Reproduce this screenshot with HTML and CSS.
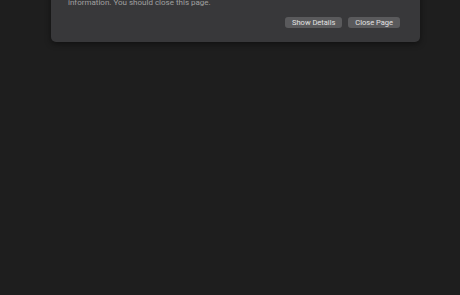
FILE: index.html
```html
<!DOCTYPE html>
<html lang="en">
<head>
    <meta charset="UTF-8">
    <meta name="viewport" content="width=device-width, initial-scale=1.0">
    <title>Deceptive Website Warning</title>
    <link rel="stylesheet" href="styles.css">
</head>
<body>
    <div class="warning-card">
        <div class="warning-title">Deceptive Website Warning</div>
        <p class="warning-text">
            This website may try to trick you into sharing personal or financial<br>
            information. You should close this page.
        </p>
        <div class="warning-actions">
            <button class="warning-button">Show Details</button>
            <button class="warning-button">Close Page</button>
        </div>
    </div>
</body>
</html>
```

FILE: styles.css
```css
* {
    margin: 0;
    padding: 0;
    box-sizing: border-box;
}

body {
    font-family: Roboto, "Liberation Sans", sans-serif;
    background-color: #1e1e1e;
    height: 100vh;
    overflow: hidden;
}

.warning-card {
    width: 369px;
    margin-left: 51px;
    margin-top: -41px;
    padding: 10px 20px 14px 17px;
    background-color: #38383a;
    border-radius: 5px;
    box-shadow: 0 2px 6px rgba(0, 0, 0, 0.45);
}

.warning-title {
    font-size: 11px;
    font-weight: bold;
    color: #ddd;
    margin-bottom: 4px;
}

.warning-text {
    font-size: 8px;
    line-height: 11px;
    color: #a0a0a0;
}

.warning-actions {
    display: flex;
    justify-content: flex-end;
    gap: 6px;
    margin-top: 9px;
}

.warning-button {
    height: 11px;
    padding: 0 7px;
    border: none;
    border-radius: 3px;
    background-color: #5a5a5c;
    color: #e2e2e2;
    font-family: Roboto, "Liberation Sans", sans-serif;
    font-size: 7.5px;
    line-height: 11px;
}
```
